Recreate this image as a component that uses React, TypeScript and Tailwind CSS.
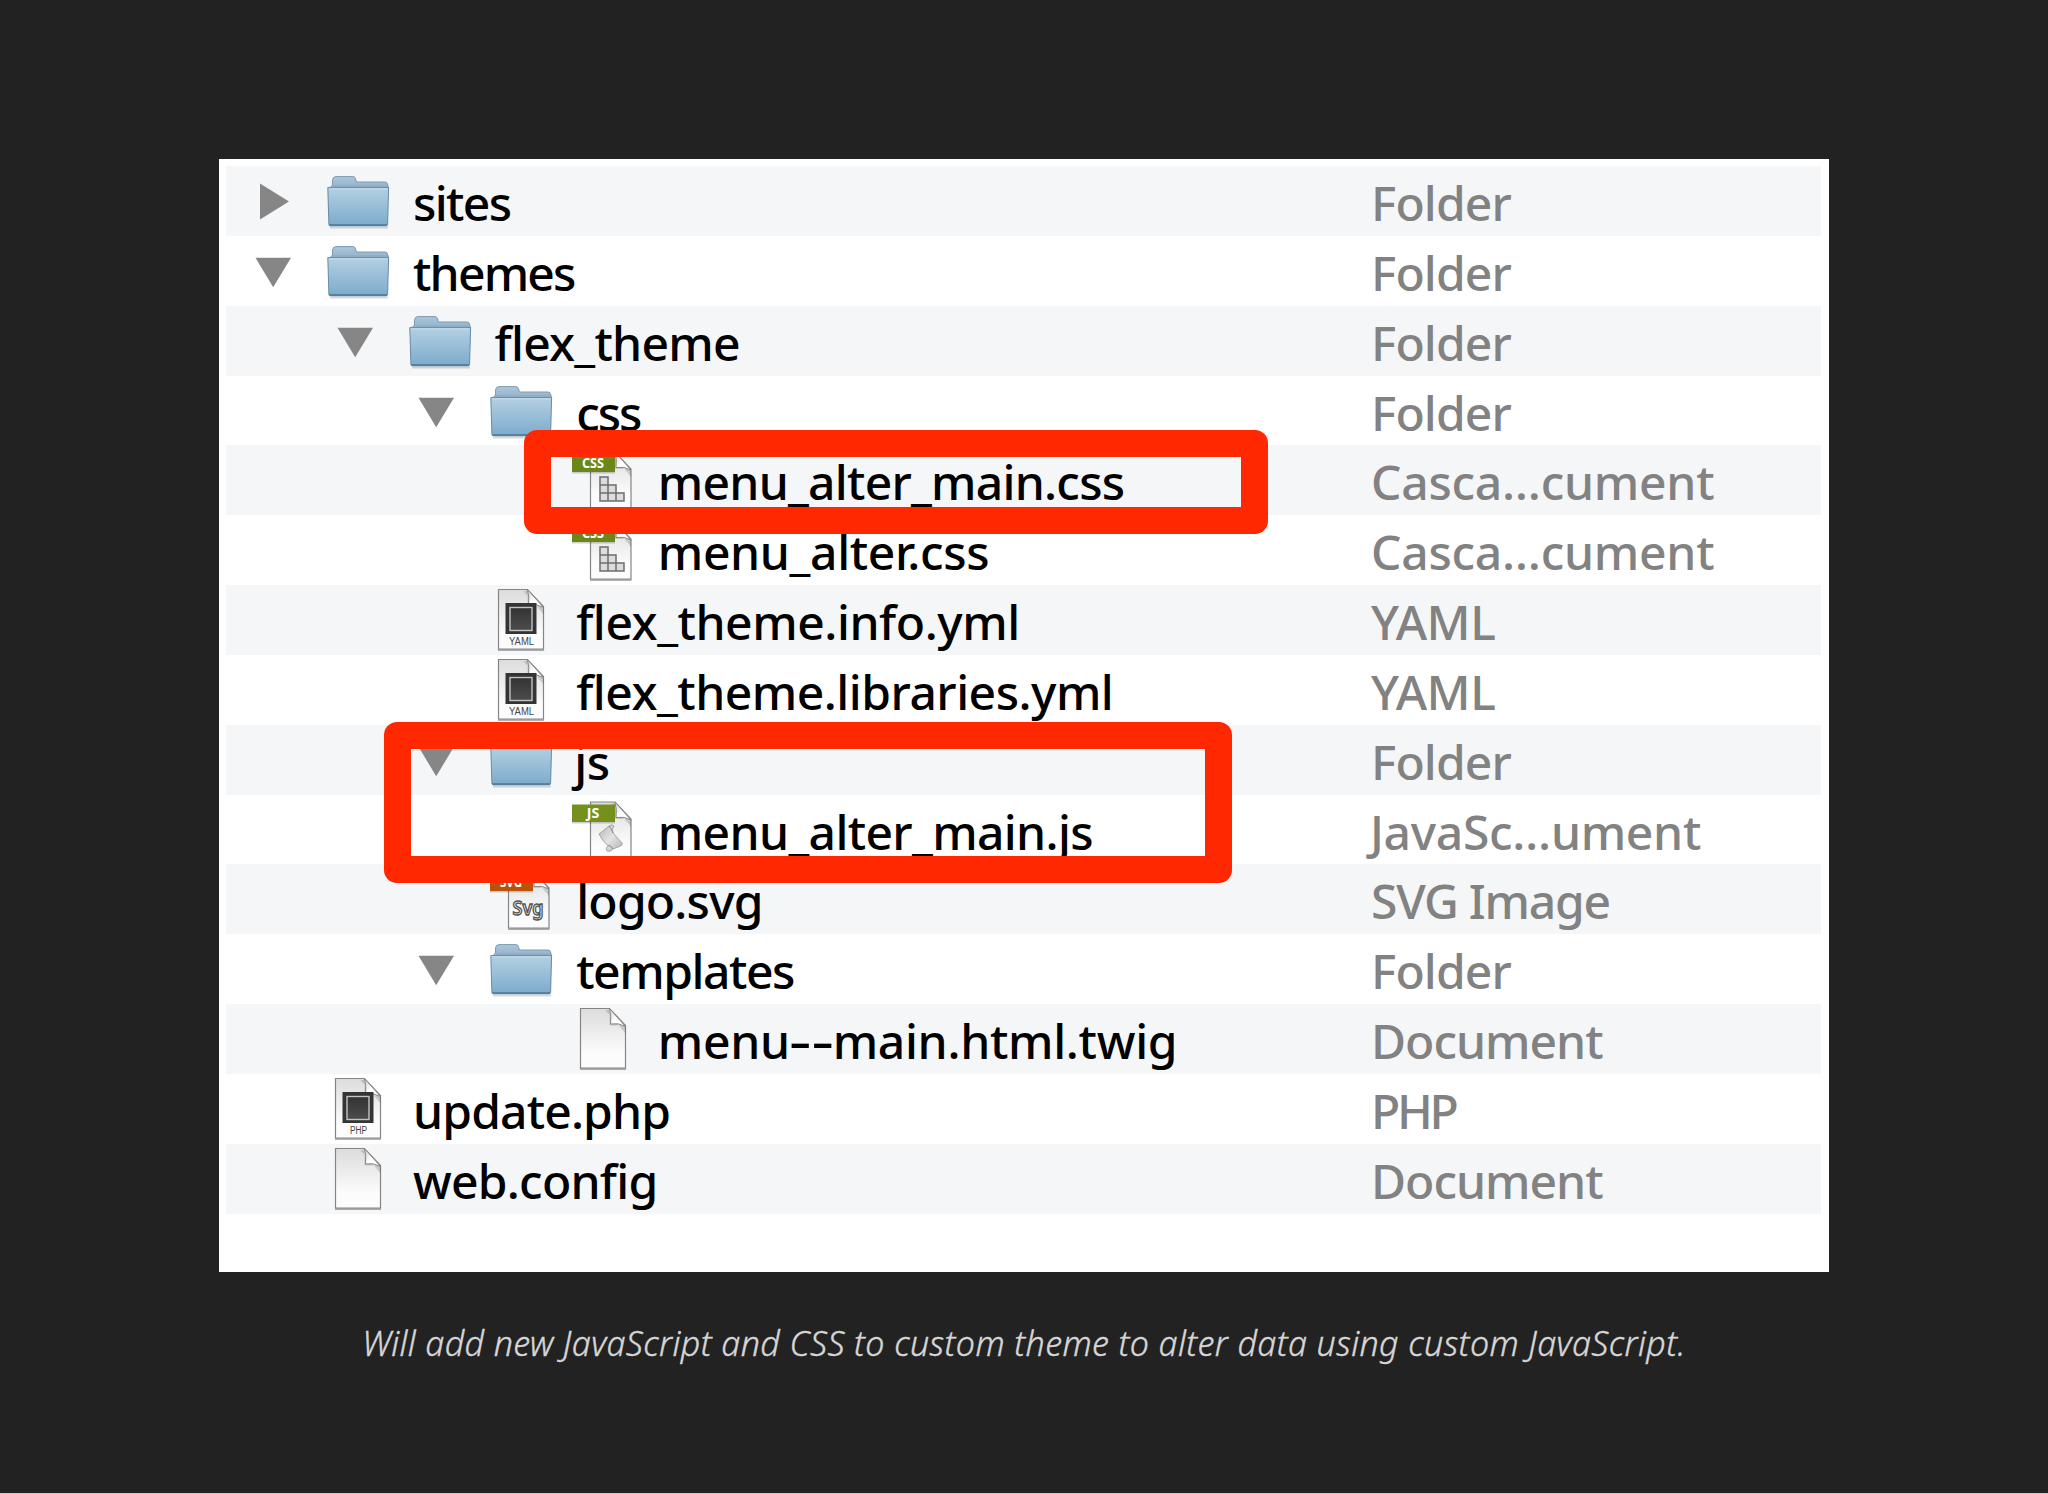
import React from "react";

type IconKind = "folder" | "css" | "js" | "svg" | "yaml" | "php" | "doc";

type Entry = {
  name: string;
  kind: string;
  icon: IconKind;
  level: number;
  arrow?: "open" | "closed";
  tracking?: string;
};

const entries: Entry[] = [
  { name: "sites", kind: "Folder", icon: "folder", level: 0, arrow: "closed", tracking: "tracking-[-1.6px]" },
  { name: "themes", kind: "Folder", icon: "folder", level: 0, arrow: "open", tracking: "tracking-[-1.8px]" },
  { name: "flex_theme", kind: "Folder", icon: "folder", level: 1, arrow: "open", tracking: "tracking-[-0.75px]" },
  { name: "css", kind: "Folder", icon: "folder", level: 2, arrow: "open", tracking: "tracking-[-2px]" },
  { name: "menu_alter_main.css", kind: "Casca…cument", icon: "css", level: 3, tracking: "tracking-[-0.75px]" },
  { name: "menu_alter.css", kind: "Casca…cument", icon: "css", level: 3, tracking: "tracking-[-0.35px]" },
  { name: "flex_theme.info.yml", kind: "YAML", icon: "yaml", level: 2, tracking: "tracking-[-0.45px]" },
  { name: "flex_theme.libraries.yml", kind: "YAML", icon: "yaml", level: 2, tracking: "tracking-[-0.5px]" },
  { name: "js", kind: "Folder", icon: "folder", level: 2, arrow: "open", tracking: "tracking-[-0.5px] -ml-[2px]" },
  { name: "menu_alter_main.js", kind: "JavaSc…ument", icon: "js", level: 3, tracking: "tracking-[-0.65px]" },
  { name: "logo.svg", kind: "SVG Image", icon: "svg", level: 2, tracking: "tracking-[-0.8px]" },
  { name: "templates", kind: "Folder", icon: "folder", level: 2, arrow: "open", tracking: "tracking-[-1.45px]" },
  { name: "menu--main.html.twig", kind: "Document", icon: "doc", level: 3, tracking: "tracking-[-0.3px]" },
  { name: "update.php", kind: "PHP", icon: "php", level: 0, tracking: "tracking-[-0.85px]" },
  { name: "web.config", kind: "Document", icon: "doc", level: 0, tracking: "tracking-[-0.75px]" },
];

const kindTracking: Record<string, string> = {
  Folder: "tracking-[-0.9px]",
  "Casca…cument": "tracking-[-0.25px]",
  YAML: "tracking-[-0.5px]",
  "JavaSc…ument": "tracking-[-0.3px] -ml-px",
  "SVG Image": "tracking-[-1.25px]",
  Document: "tracking-[-1px]",
  PHP: "tracking-[-3.3px]",
};

const indents = ["pl-0", "pl-[81.6px]", "pl-[163.2px]", "pl-[244.8px]"];

const Arrow: React.FC<{ state?: "open" | "closed" }> = ({ state }) => (
  <svg viewBox="0 0 38 70" className="w-[38px] h-[70px] shrink-0">
    {state === "open" && <path d="M1.5 21.8H37L19.2 51.2Z" fill="#868686" />}
    {state === "closed" && <path d="M6 17.6V53.4L35 35.5Z" fill="#868686" />}
  </svg>
);

const Folder = () => (
  <>
    <path d="M3 61.5h58" stroke="#000" strokeOpacity=".15" strokeWidth="2" />
    <path
      d="M2.5 22L5.5 19V14Q6 10.6 9 10.6H26Q28 10.6 28.6 13L29.4 16H58Q60.5 16 60.8 19L61.6 22Z"
      fill="url(#tab)"
      stroke="#7d9bb4"
    />
    <path d="M6 20H60" stroke="#8aa7be" />
    <path d="M.8 21.6H61.6L60.6 58.5Q60.4 59.8 59 59.8H3.5Q2 59.8 1.9 58.5Z" fill="url(#body)" stroke="#668ba8" />
    <path d="M2 22.9H60.5" stroke="#c9deec" />
    <path d="M2.4 59H60" stroke="#4c7694" strokeWidth="1.4" />
  </>
);

const Page: React.FC<{ x?: number; y?: number }> = ({ x = 8.5, y = 4.5 }) => {
  const right = x + 45 - (x > 9 ? 4.5 : 0);
  const fold = right - 16;
  return (
    <>
      <path d={`M${x - 0.5} 65H${right + 0.5}`} stroke="#000" strokeOpacity=".3" strokeWidth="2" />
      <path d={`M${x} ${y}H${fold}L${right} ${y + 17}V64H${x}Z`} fill="url(#page)" stroke="#858585" strokeWidth="1.2" />
      <path d={`M${fold} ${y + 1}V${y + 17}H${right}V${y + 25}Q${right - 8} ${y + 15} ${fold - 4} ${y + 2}Z`} fill="#000" fillOpacity=".14" />
      <path d={`M${fold} ${y}Q${fold + 2} ${y + 8} ${fold + 1} ${y + 15.5}Q${fold + 9} ${y + 14} ${right} ${y + 18}Z`} fill="url(#fold)" stroke="#858585" />
    </>
  );
};

const Chip: React.FC<{ label: string }> = ({ label }) => (
  <>
    <rect x="15.5" y="18" width="31" height="31" fill="#343434" />
    <rect x="20" y="22.5" width="22" height="23" fill="url(#chip)" stroke="#c4c4c4" strokeWidth="1.4" />
    <text x="31.5" y="60.3" textAnchor="middle" fontSize="10" textLength={label === "PHP" ? 17 : 25} lengthAdjust="spacingAndGlyphs" fontFamily="Liberation Sans" fill="#444">
      {label}
    </text>
  </>
);

const Badge: React.FC<{ label: string; fill: string }> = ({ label, fill }) => (
  <>
    <rect x="0" y="10" width="43" height="18.5" fill="#000" fillOpacity=".18" />
    <rect x="0" y="9.5" width="43" height="17.5" fill={fill} />
    <text x="21" y="23.3" textAnchor="middle" fontSize="13.5" fontWeight="700" textLength={label === "JS" ? 12.5 : 22} lengthAdjust="spacingAndGlyphs" fontFamily="Noto Sans" fill="#fff">
      {label}
    </text>
  </>
);

const FileIcon: React.FC<{ kind: IconKind }> = ({ kind }) => (
  <svg viewBox="0 0 64 70" className="w-[64px] h-[70px] shrink-0">
    {kind === "folder" && <Folder />}
    {kind === "doc" && <Page />}
    {(kind === "yaml" || kind === "php") && (
      <>
        <Page />
        <Chip label={kind.toUpperCase()} />
      </>
    )}
    {kind === "css" && (
      <>
        <Page x={18.5} y={7} />
        <path
          d="M28 32H36V40H44V48H52V56H28ZM28 40H36V56M28 48H44V56"
          fill="#dcdcdc"
          stroke="#6c6c6c"
          strokeWidth="1.5"
        />
        <Badge label="CSS" fill="#6a8717" />
      </>
    )}
    {kind === "js" && (
      <>
        <Page x={18.5} y={7} />
        <path
          d="M27 39L37 31Q40 28.5 42 31Q39.5 34 41 38L50 48Q51 50 48.5 51L41 54Q38 57.5 35 56Q33 54 36 50.5Q31 47 27 39Z"
          fill="url(#scroll)"
          stroke="#a5a5a5"
        />
        <path d="M37 31Q39 33 41 38M36 50.5Q39 50 41 54" fill="none" stroke="#8a8a8a" />
        <Badge label="JS" fill="#75911d" />
      </>
    )}
    {kind === "svg" && (
      <>
        <Page x={18.5} y={7} />
        <text x="38" y="51" textAnchor="middle" fontSize="19" fontWeight="600" textLength="31" lengthAdjust="spacingAndGlyphs" fontFamily="Noto Sans" fill="#e8e8e8" stroke="#555" strokeWidth="1.3">
          Svg
        </text>
        <Badge label="SVG" fill="#b9530c" />
      </>
    )}
  </svg>
);

const Gradients = () => (
  <svg className="absolute w-0 h-0">
    <defs>
      <linearGradient id="body" x2="0" y2="1">
        <stop offset="0" stopColor="#b4d0e2" />
        <stop offset="1" stopColor="#7cabcc" />
      </linearGradient>
      <linearGradient id="tab" x2="0" y2="1">
        <stop offset="0" stopColor="#adc6d9" />
        <stop offset="1" stopColor="#91b2cc" />
      </linearGradient>
      <linearGradient id="page" x2="0" y2="1">
        <stop offset="0" stopColor="#dcdcdc" />
        <stop offset=".75" stopColor="#fcfcfc" />
      </linearGradient>
      <linearGradient id="fold" x2="1" y2="1">
        <stop offset="0" stopColor="#d0d0d0" />
        <stop offset=".5" stopColor="#fff" />
      </linearGradient>
      <linearGradient id="chip" x2="0" y2="1">
        <stop offset="0" stopColor="#333" />
        <stop offset="1" stopColor="#4c4c4c" />
      </linearGradient>
      <linearGradient id="scroll" x2="1" y2="1">
        <stop offset="0" stopColor="#b4b4b4" />
        <stop offset=".5" stopColor="#e4e4e4" />
        <stop offset="1" stopColor="#b0b0b0" />
      </linearGradient>
    </defs>
  </svg>
);

// Double hyphens are drawn wider than the font's own
const FileName: React.FC<{ name: string }> = ({ name }) => {
  const [head, tail] = name.split("--");
  if (tail === undefined) return <>{name}</>;
  return (
    <>
      {head}
      <span className="inline-block scale-x-[1.45] mx-[6px] tracking-normal">--</span>
      {tail}
    </>
  );
};

const Row: React.FC<{ entry: Entry }> = ({ entry }) => (
  <div className="flex h-[69.85px] odd:bg-[#f5f6f8] font-['Noto_Sans',sans-serif] text-[48px] leading-[74px] font-medium whitespace-nowrap">
    <div className="flex w-[1145px] shrink-0 pl-[28px]">
      <div className={`flex ${indents[entry.level]}`}>
        <Arrow state={entry.arrow} />
        <div className="ml-[35px] mr-[22px]">
          <FileIcon kind={entry.icon} />
        </div>
        <span className={`text-black ${entry.tracking ?? ""}`}>
          <FileName name={entry.name} />
        </span>
      </div>
    </div>
    <span className={`text-[#828282] ${kindTracking[entry.kind]}`}>{entry.kind}</span>
  </div>
);

export default function App() {
  return (
    <main className="flex h-[1494px] w-[2048px] flex-col items-center overflow-hidden border-b border-[#c8c8c8] bg-[#222223] pt-[159px]">
      <Gradients />
      <figure className="flex flex-col items-center">
        <div className="relative h-[1113px] w-[1610px] bg-white pt-[7px] pl-[7px] pr-[8px]">
          {entries.map((entry) => (
            <Row key={entry.name} entry={entry} />
          ))}
          <div className="absolute left-[304.5px] top-[271px] h-[104px] w-[744.5px] rounded-[13px] border-[27px] border-[#ff2800]" />
          <div className="absolute left-[164.5px] top-[563px] h-[160.5px] w-[848.5px] rounded-[13px] border-[27px] border-[#ff2800]" />
        </div>
        <figcaption className="mt-[47px] whitespace-nowrap font-['Noto_Sans',sans-serif] text-[34px] font-light italic leading-[48px] tracking-[0.39px] text-[#d6d6d6] [-webkit-text-stroke:0.4px_#d6d6d6]">
          Will add new JavaScript and CSS to custom theme to alter data using custom JavaScript.
        </figcaption>
      </figure>
    </main>
  );
}
